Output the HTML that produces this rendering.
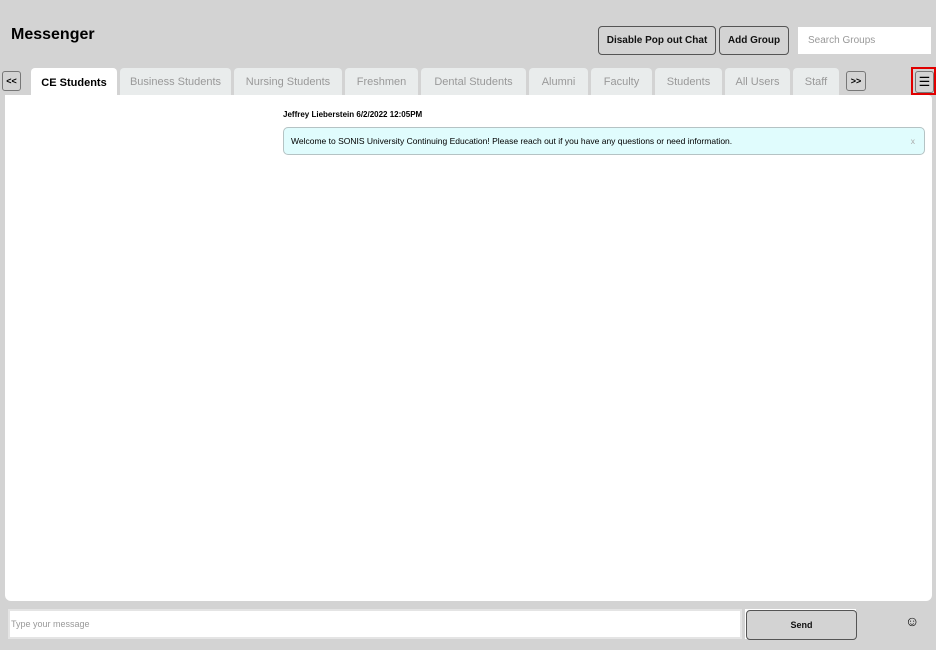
<!DOCTYPE html>
<html><head><style>
body{margin:0;width:936px;height:650px;background:#d3d3d3;font-family:"Liberation Sans",sans-serif;position:relative;overflow:hidden}
.a{position:absolute;box-sizing:border-box}
.btn{border:1px solid #555;border-radius:4px;background:#d3d3d3;font-size:10px;font-weight:bold;display:flex;align-items:center;justify-content:center;color:#111}
.tab{position:absolute;top:68px;height:27px;background:#e9ecec;border-radius:4px 4px 0 0;color:#999;font-size:11px;display:flex;align-items:center;justify-content:center}
.sm{border:1px solid #777;border-radius:3px;background:#d3d3d3;font-size:9px;font-weight:bold;display:flex;align-items:center;justify-content:center}
</style></head><body>
<div class="a" style="left:11px;top:26px;font-size:16px;font-weight:bold">Messenger</div>
<div class="a btn" style="left:598px;top:26px;width:118px;height:29px">Disable Pop out Chat</div>
<div class="a btn" style="left:719px;top:26px;width:70px;height:29px">Add Group</div>
<div class="a" style="left:798px;top:27px;width:133px;height:27px;background:#fff;font-size:10px;color:#999;padding:8px 0 0 10px">Search Groups</div>
<div class="a sm" style="left:2px;top:71px;width:19px;height:20px">&lt;&lt;</div>
<div class="tab" style="left:31px;width:86px;background:#fff;color:#000;font-weight:bold;padding-top:3px;box-sizing:border-box">CE Students</div>
<div class="tab" style="left:120px;width:111px">Business Students</div>
<div class="tab" style="left:234px;width:108px">Nursing Students</div>
<div class="tab" style="left:345px;width:73px">Freshmen</div>
<div class="tab" style="left:421px;width:105px">Dental Students</div>
<div class="tab" style="left:529px;width:59px">Alumni</div>
<div class="tab" style="left:591px;width:61px">Faculty</div>
<div class="tab" style="left:655px;width:67px">Students</div>
<div class="tab" style="left:725px;width:65px">All Users</div>
<div class="tab" style="left:793px;width:46px">Staff</div>
<div class="a sm" style="left:846px;top:71px;width:20px;height:20px">&gt;&gt;</div>
<div class="a" style="left:911px;top:67px;width:25px;height:28px;border:2px solid #e00000;padding:2px"><div class="sm" style="width:100%;height:100%;font-size:13px;font-weight:normal">☰</div></div>
<div class="a" style="left:5px;top:95px;width:927px;height:506px;background:#fff;border-radius:0 4px 6px 6px"></div>
<div class="a" style="left:283px;top:110px;font-size:8px;font-weight:bold">Jeffrey Lieberstein 6/2/2022 12:05PM</div>
<div class="a" style="left:283px;top:127px;width:642px;height:28px;background:#e0fcfd;border:1px solid #b5c3c4;border-radius:5px;font-size:8.5px;padding:8px 0 0 7px">Welcome to SONIS University Continuing Education! Please reach out if you have any questions or need information.<span style="position:absolute;right:9px;top:8px;color:#aaa">x</span></div>
<div class="a" style="left:8px;top:609px;width:734px;height:30px;background:#fff;border:2px solid #e4e4e4;font-size:9px;color:#999;padding:8px 0 0 1px">Type your message</div>
<div class="a" style="left:745px;top:609px;width:111px;height:30px;background:#fff;padding:1px"><div class="btn" style="width:100%;height:100%;font-size:9px">Send</div></div>
<div class="a" style="left:905px;top:613px;font-size:14px">☺</div>
</body></html>
